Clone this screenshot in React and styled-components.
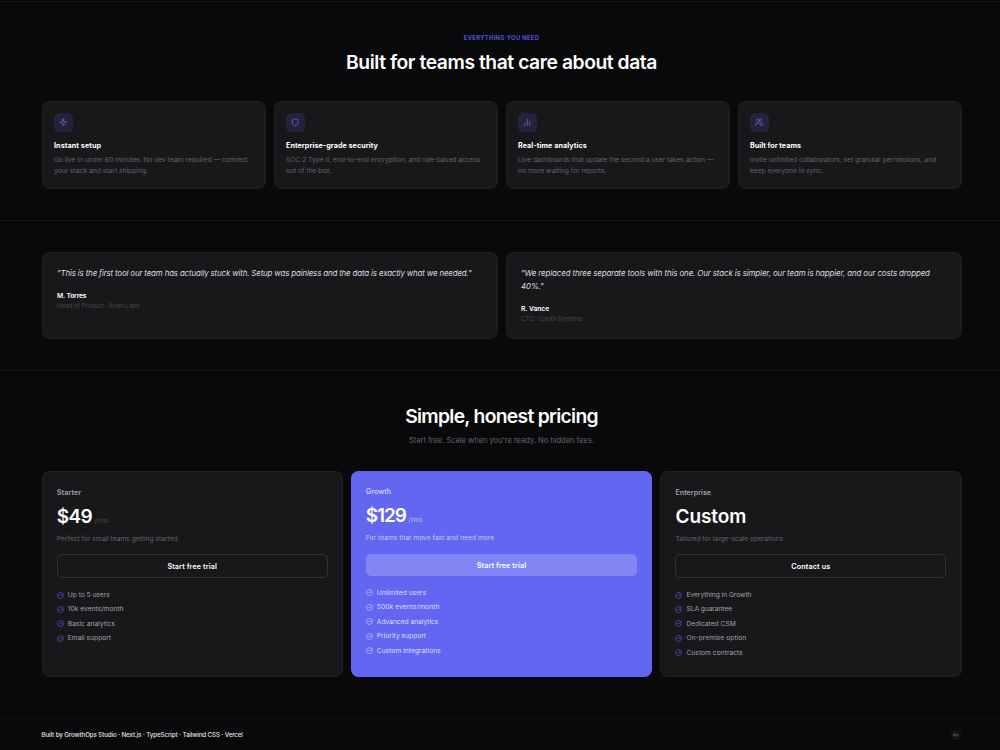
import styled, { createGlobalStyle } from "styled-components";
import {
  ChartNoAxesColumn,
  CircleCheckBig,
  Shield,
  Users,
  Zap,
} from "lucide-react";

const GlobalStyles = createGlobalStyle`
  :root {
    --color-bg: #09090b;
    --color-card: #18181b;
    --color-line: #161619;
    --color-border: #202023;
    --color-muted: #62626a;
    --color-faint: #46464d;
    --color-soft: #a1a1aa;
    --color-brand: #6366f1;
  }

  * {
    box-sizing: border-box;
    margin: 0;
    padding: 0;
  }

  body {
    background: var(--color-bg);
    color: #fff;
    font-family: Inter, "Liberation Sans", sans-serif;
    overflow: hidden;
  }
`;

const Page = styled.div`
  height: 750px;
  padding-top: 1px;
  overflow: hidden;
`;

const Section = styled.section`
  height: ${(props) => props.$height}px;
  padding: ${(props) => props.$top}px 38.5px 0 41.5px;
  border-top: 1px solid var(--color-line);
`;

const Eyebrow = styled.p`
  font-size: 5.8px;
  font-weight: 700;
  line-height: 10px;
  text-align: center;
  letter-spacing: ${(props) => props.$track}px;
  color: #5053dc;
`;

const Heading = styled.h2`
  margin-top: ${(props) => props.$gap || 0}px;
  font-size: 19.3px;
  font-weight: 600;
  line-height: 24px;
  text-align: center;
  white-space: nowrap;
  letter-spacing: ${(props) => props.$track}px;
`;

const Subheading = styled.p`
  margin-top: 8px;
  font-size: 7.6px;
  line-height: 10px;
  text-align: center;
  letter-spacing: ${(props) => props.$track}px;
  color: var(--color-muted);
`;

const Grid = styled.div`
  display: grid;
  grid-template-columns: repeat(${(props) => props.$columns}, 1fr);
  gap: 8px;
  margin-top: ${(props) => props.$gap || 0}px;
`;

const Card = styled.article`
  height: ${(props) => props.$height}px;
  border: 1px solid var(--color-border);
  border-radius: 7.5px;
  background: var(--color-card);
`;

const FeatureCard = styled(Card)`
  padding: 11px 11.5px;
`;

const IconBox = styled.div`
  display: flex;
  align-items: center;
  justify-content: center;
  width: 19px;
  height: 19px;
  border-radius: 5px;
  background: #24233c;
  color: #7376e8;
`;

const FeatureTitle = styled.h3`
  margin-top: 8.5px;
  font-size: 7.2px;
  font-weight: 700;
  line-height: 10px;
  letter-spacing: ${(props) => props.$track}px;
`;

const Line = styled.span`
  display: block;
  white-space: nowrap;
  letter-spacing: ${(props) => props.$track}px;
`;

const FeatureText = styled.p`
  margin-top: 3.5px;
  font-size: 6.8px;
  line-height: 11px;
  color: var(--color-muted);
`;

const QuoteCard = styled(Card)`
  padding: 14px 14.5px;
`;

const Quote = styled.blockquote`
  font-size: 7.9px;
  font-style: italic;
  line-height: 13.2px;
  color: #dcdce0;
`;

const Author = styled.p`
  margin-top: 11px;
  font-size: 6.7px;
  font-weight: 600;
  line-height: 10px;
  letter-spacing: ${(props) => props.$track}px;
`;

const Role = styled.p`
  font-size: 6.3px;
  line-height: 10px;
  letter-spacing: ${(props) => props.$track}px;
  color: var(--color-faint);
`;

const PlanCard = styled(Card)`
  padding: 15.3px 14.3px;

  ${(props) =>
    props.$featured &&
    `
    padding: 15.7px 15px;
    border: none;
    background: var(--color-brand);
  `}
`;

const PlanName = styled.h3`
  font-size: 7.1px;
  font-weight: 600;
  line-height: 10px;
  letter-spacing: ${(props) => props.$track}px;
  color: ${(props) => (props.$featured ? "#cfd0fb" : "var(--color-soft)")};
`;

const Price = styled.p`
  display: flex;
  align-items: baseline;
  gap: 2.6px;
  height: 24px;
  margin-top: 7px;
  font-size: 19px;
  font-weight: 600;
  line-height: 24px;
  letter-spacing: ${(props) => props.$track}px;
`;

const Period = styled.span`
  font-size: 7.3px;
  font-weight: 400;
  line-height: 10px;
  letter-spacing: 0.1px;
  color: ${(props) => (props.$featured ? "#b9bafa" : "var(--color-faint)")};
`;

const PlanText = styled.p`
  margin-top: 5px;
  font-size: 6.7px;
  line-height: 10px;
  letter-spacing: ${(props) => props.$track}px;
  color: ${(props) => (props.$featured ? "#c6c7fa" : "var(--color-muted)")};
`;

const PlanButton = styled.button`
  display: block;
  width: 100%;
  height: ${(props) => (props.$featured ? 22.5 : 24)}px;
  margin-top: 10.7px;
  border: ${(props) => (props.$featured ? "none" : "1px solid #323236")};
  border-radius: 5px;
  background: ${(props) => (props.$featured ? "#8285f4" : "transparent")};
  color: #fff;
  font-family: inherit;
  font-size: 7.2px;
  font-weight: 600;
  letter-spacing: ${(props) => props.$track}px;
`;

const PlanList = styled.ul`
  display: grid;
  grid-auto-rows: 14.4px;
  margin-top: 9.5px;
  list-style: none;
`;

const PlanItem = styled.li`
  display: flex;
  align-items: center;
  gap: 4px;
  font-size: 6.7px;
  letter-spacing: ${(props) => props.$track}px;
  color: ${(props) => (props.$featured ? "#dedffc" : "var(--color-soft)")};

  svg {
    color: ${(props) => (props.$featured ? "#d4d5fc" : "#6366f1")};
  }
`;

const Footer = styled.footer`
  display: flex;
  align-items: center;
  justify-content: space-between;
  height: 32px;
  padding: 0 39px 0 41.5px;
  border-top: 1px solid #121215;
  font-size: 6.2px;
  font-weight: 500;
  letter-spacing: ${(props) => props.$track}px;
  color: #e4e4e7;
`;

const Badge = styled.div`
  display: flex;
  align-items: center;
  justify-content: center;
  width: 10px;
  height: 10px;
  border-radius: 2px;
  background: #111214;
`;

const features = [
  {
    icon: Zap,
    title: "Instant setup",
    track: 0.08,
    lines: [
      ["Go live in under 60 minutes. No dev team required — connect", -0.075],
      ["your stack and start shipping.", -0.04],
    ],
  },
  {
    icon: Shield,
    title: "Enterprise-grade security",
    track: 0.04,
    lines: [
      ["SOC 2 Type II, end-to-end encryption, and role-based access", -0.065],
      ["out of the box.", -0.07],
    ],
  },
  {
    icon: ChartNoAxesColumn,
    title: "Real-time analytics",
    track: 0.06,
    lines: [
      ["Live dashboards that update the second a user takes action —", -0.08],
      ["no more waiting for reports.", -0.03],
    ],
  },
  {
    icon: Users,
    title: "Built for teams",
    track: 0,
    lines: [
      ["Invite unlimited collaborators, set granular permissions, and", -0.085],
      ["keep everyone in sync.", -0.04],
    ],
  },
];

const quotes = [
  {
    lines: [
      [
        "\"This is the first tool our team has actually stuck with. Setup was painless and the data is exactly what we needed.\"",
        -0.15,
      ],
    ],
    author: ["M. Torres", -0.15],
    role: ["Head of Product · Arlen Labs", -0.13],
  },
  {
    lines: [
      [
        "\"We replaced three separate tools with this one. Our stack is simpler, our team is happier, and our costs dropped",
        -0.11,
      ],
      ["40%.\"", -0.1],
    ],
    author: ["R. Vance", -0.03],
    role: ["CTO · Corith Systems", -0.15],
  },
];

const plans = [
  {
    name: ["Starter", 0.12],
    price: ["$49", -0.7],
    period: "/mo",
    text: ["Perfect for small teams getting started", 0],
    action: ["Start free trial", 0.1],
    items: [
      ["Up to 5 users", -0.04],
      ["10k events/month", 0],
      ["Basic analytics", 0],
      ["Email support", 0],
    ],
  },
  {
    featured: true,
    name: ["Growth", 0.07],
    price: ["$129", -1.1],
    period: "/mo",
    text: ["For teams that move fast and need more", 0.02],
    action: ["Start free trial", 0.1],
    items: [
      ["Unlimited users", 0.02],
      ["500k events/month", 0.08],
      ["Advanced analytics", -0.03],
      ["Priority support", 0],
      ["Custom integrations", 0.02],
    ],
  },
  {
    name: ["Enterprise", 0.02],
    price: ["Custom", -0.05],
    text: ["Tailored for large-scale operations", -0.03],
    action: ["Contact us", 0.15],
    items: [
      ["Everything in Growth", -0.05],
      ["SLA guarantee", -0.07],
      ["Dedicated CSM", 0],
      ["On-premise option", 0.04],
      ["Custom contracts", 0.02],
    ],
  },
];

function Lines({ lines }) {
  return lines.map(([text, track]) => (
    <Line key={text} $track={track}>
      {text}
    </Line>
  ));
}

function Feature({ feature }) {
  const { icon: Icon, title, track, lines } = feature;

  return (
    <FeatureCard $height={88}>
      <IconBox>
        <Icon size={8.5} strokeWidth={2} />
      </IconBox>
      <FeatureTitle $track={track}>{title}</FeatureTitle>
      <FeatureText>
        <Lines lines={lines} />
      </FeatureText>
    </FeatureCard>
  );
}

function Testimonial({ quote }) {
  const { lines, author, role } = quote;

  return (
    <QuoteCard $height={87}>
      <Quote>
        <Lines lines={lines} />
      </Quote>
      <Author $track={author[1]}>{author[0]}</Author>
      <Role $track={role[1]}>{role[0]}</Role>
    </QuoteCard>
  );
}

function Plan({ plan }) {
  const { featured, name, price, period, text, action, items } = plan;

  return (
    <PlanCard $height={205.5} $featured={featured}>
      <PlanName $featured={featured} $track={name[1]}>
        {name[0]}
      </PlanName>
      <Price $track={price[1]}>
        {price[0]}
        {period && <Period $featured={featured}>{period}</Period>}
      </Price>
      <PlanText $featured={featured} $track={text[1]}>
        {text[0]}
      </PlanText>
      <PlanButton $featured={featured} $track={action[1]}>
        {action[0]}
      </PlanButton>
      <PlanList>
        {items.map(([item, track]) => (
          <PlanItem key={item} $featured={featured} $track={track}>
            <CircleCheckBig size={7} strokeWidth={2.2} />
            {item}
          </PlanItem>
        ))}
      </PlanList>
    </PlanCard>
  );
}

function App() {
  return (
    <>
      <GlobalStyles />
      <Page>
        <Section $height={219} $top={31}>
          <Eyebrow $track={0.34}>EVERYTHING YOU NEED</Eyebrow>
          <Heading $gap={7} $track={-0.44}>
            Built for teams that care about data
          </Heading>
          <Grid $columns={4} $gap={27}>
            {features.map((feature) => (
              <Feature key={feature.title} feature={feature} />
            ))}
          </Grid>
        </Section>

        <Section $height={150} $top={31}>
          <Grid $columns={2}>
            {quotes.map((quote) => (
              <Testimonial key={quote.author[0]} quote={quote} />
            ))}
          </Grid>
        </Section>

        <Section $height={348} $top={33}>
          <Heading $track={-0.7}>Simple, honest pricing</Heading>
          <Subheading $track={-0.05}>
            Start free. Scale when you're ready. No hidden fees.
          </Subheading>
          <Grid $columns={3} $gap={25.4}>
            {plans.map((plan) => (
              <Plan key={plan.name[0]} plan={plan} />
            ))}
          </Grid>
        </Section>

        <Footer $track={-0.1}>
          <p>
            Built by GrowthOps Studio · Next.js · TypeScript · Tailwind CSS ·
            Vercel
          </p>
          <Badge>
            <svg width="6" height="4" viewBox="0 0 6 4">
              <rect width="3" height="3" y="0.5" fill="#3a3b42" />
              <rect width="2" height="3" x="3" y="0.5" fill="#4a2420" />
              <rect width="1" height="2" x="5" y="1" fill="#3a2c1c" />
            </svg>
          </Badge>
        </Footer>
      </Page>
    </>
  );
}

export default App;
